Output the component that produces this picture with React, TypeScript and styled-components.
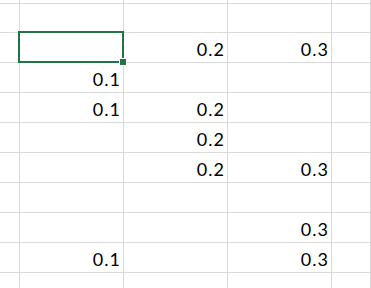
import React from "react";
import styled, { createGlobalStyle } from "styled-components";

const GlobalStyle = createGlobalStyle`
  html, body {
    margin: 0;
    padding: 0;
    background: #ffffff;
    overflow: hidden;
  }
  body {
    font-family: Lato, "Open Sans", "Liberation Sans", sans-serif;
  }
`;

const Sheet = styled.div`
  width: 371px;
  height: 288px;
  overflow: hidden;
  display: flex;
  flex-direction: column;
`;

const Row = styled.div<{ $height: number }>`
  display: flex;
  flex: none;
  height: ${(p) => p.$height}px;
`;

const Cell = styled.div<{ $width?: number }>`
  box-sizing: border-box;
  position: relative;
  flex: ${(p) => (p.$width ? `0 0 ${p.$width}px` : "1 0 auto")};
  height: 100%;
  border-right: 1px solid #dadada;
  border-bottom: 1px solid #dadada;
  display: flex;
  align-items: flex-end;
  justify-content: flex-end;
  padding: 0 2px 3px 0;
  font-size: 18px;
  letter-spacing: 1px;
  line-height: 20px;
  color: #000000;
`;

const Selection = styled.div`
  position: absolute;
  left: -2px;
  top: -2px;
  right: -1px;
  bottom: -1px;
  border: 2px solid #217346;
  pointer-events: none;
  z-index: 2;
`;

const FillHandle = styled.div`
  position: absolute;
  right: -4px;
  bottom: -4px;
  width: 6px;
  height: 6px;
  background: #217346;
  border: 1px solid #ffffff;
  z-index: 3;
`;

const widths = [20, 104, 104, 104, 0];

const data: (string | null)[][] = [
  [null, null, null, null],
  [null, null, "0.2", "0.3"],
  [null, "0.1", null, null],
  [null, "0.1", "0.2", null],
  [null, null, "0.2", null],
  [null, null, "0.2", "0.3"],
  [null, null, null, null],
  [null, null, null, "0.3"],
  [null, "0.1", null, "0.3"],
  [null, null, null, null],
];

const App = () => {
  return (
    <>
      <GlobalStyle />
      <Sheet>
        <Row $height={3}>
          {widths.map((w, i) => (
            <Cell key={i} $width={w || undefined} />
          ))}
        </Row>
        {data.map((row, r) => (
          <Row key={r} $height={30}>
            {widths.map((w, c) => (
              <Cell key={c} $width={w || undefined}>
                {row[c]}
                {r === 1 && c === 1 && (
                  <>
                    <Selection />
                    <FillHandle />
                  </>
                )}
              </Cell>
            ))}
          </Row>
        ))}
      </Sheet>
    </>
  );
};

export default App;
